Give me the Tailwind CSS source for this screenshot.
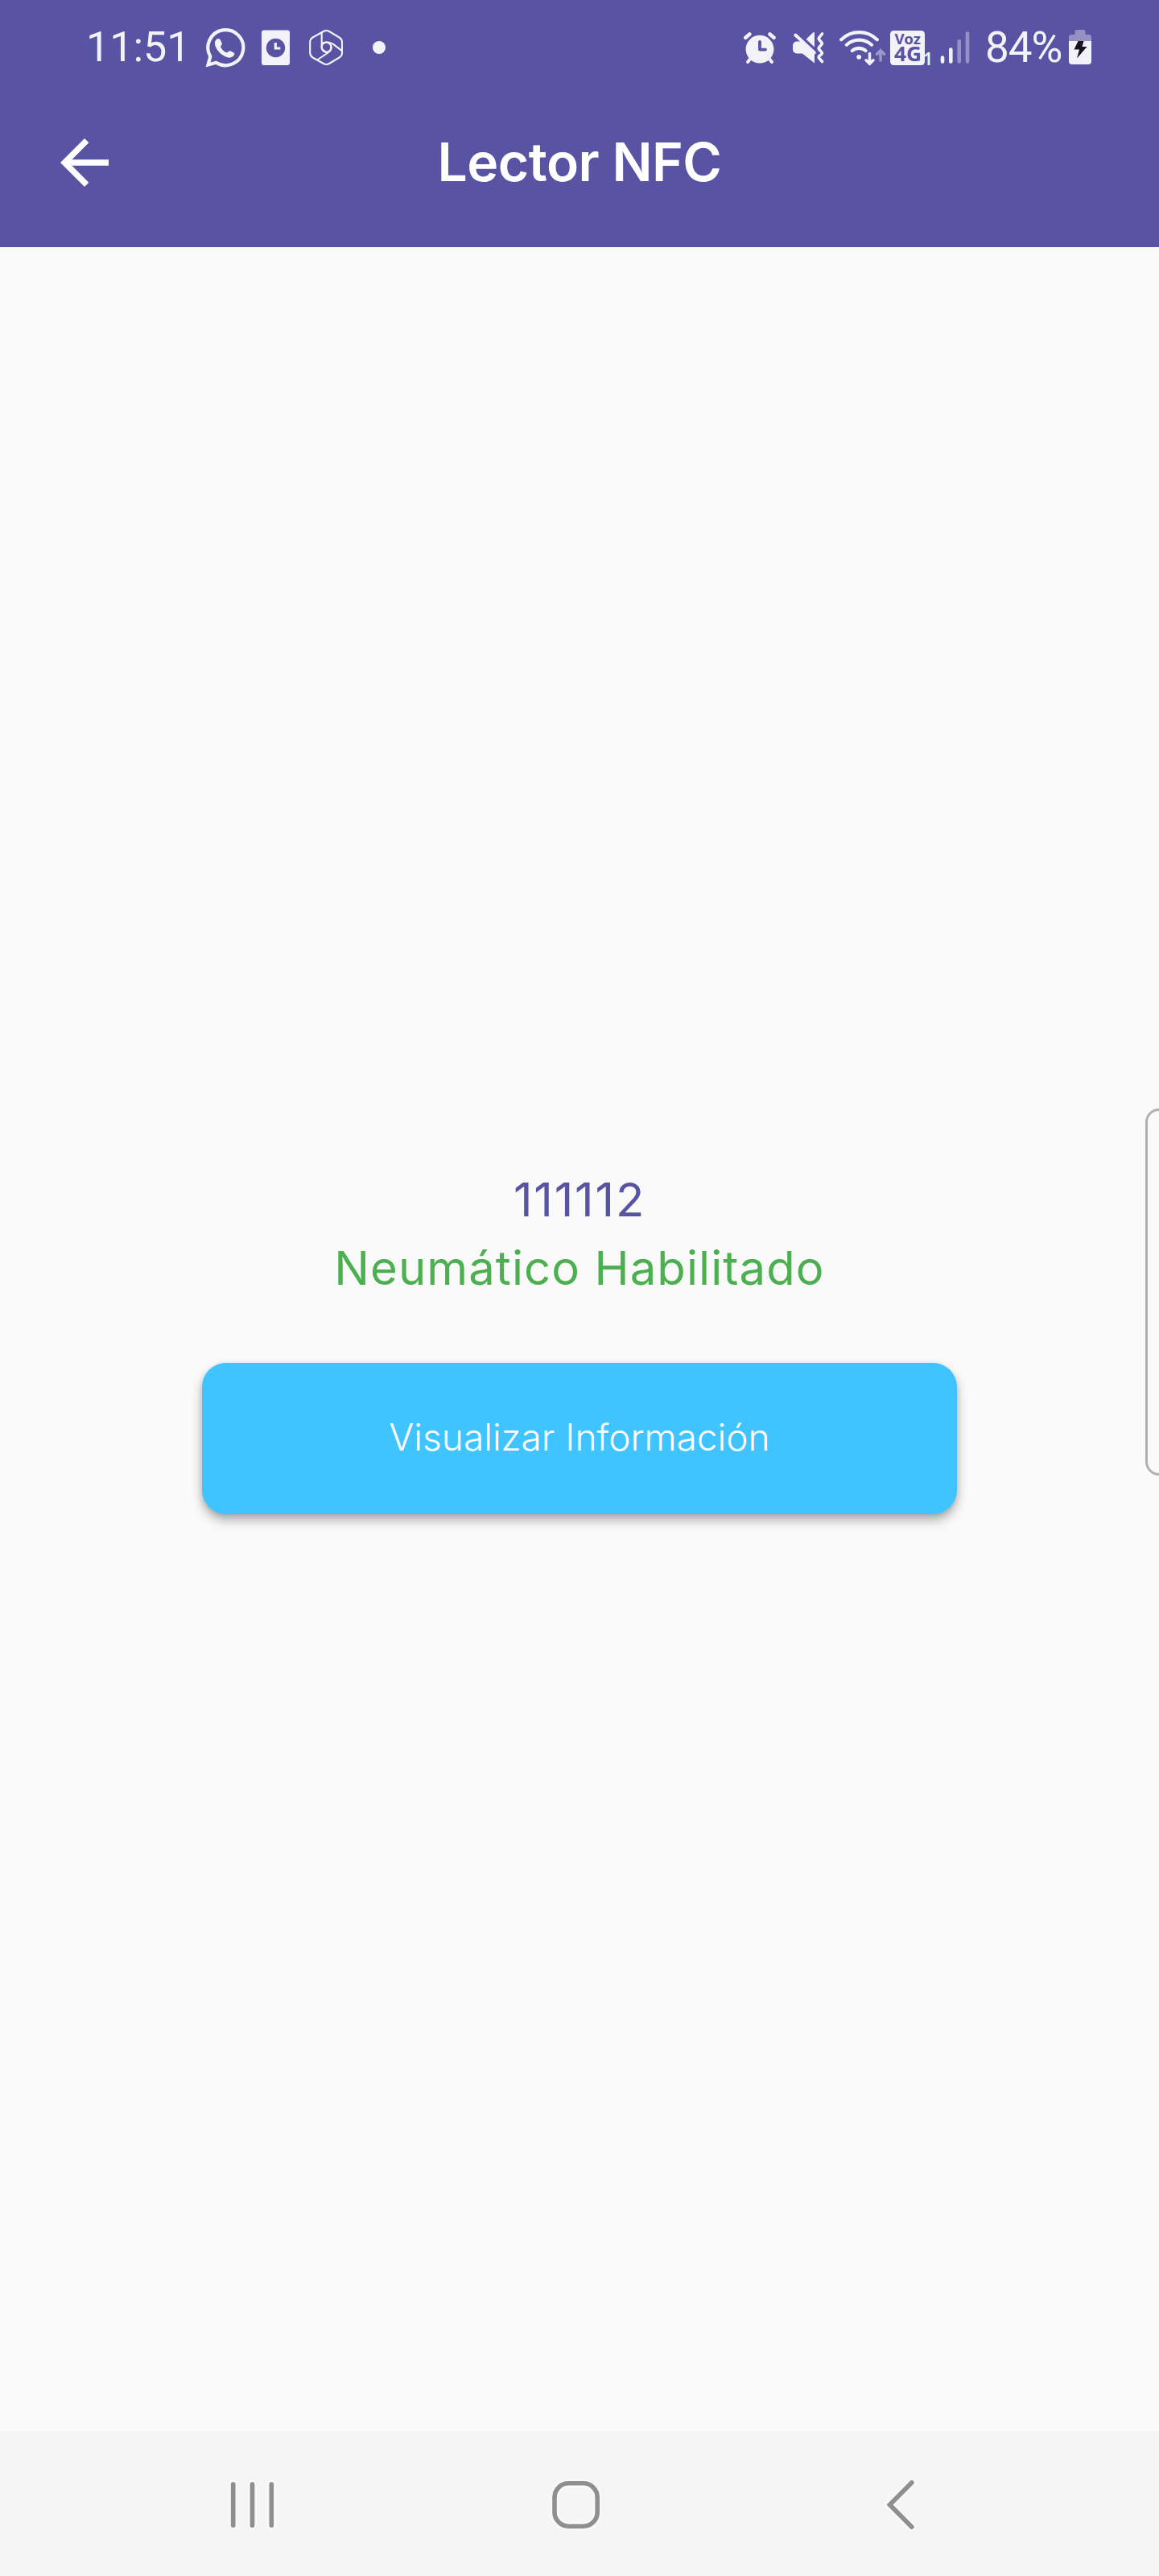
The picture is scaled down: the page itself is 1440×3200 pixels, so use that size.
<!DOCTYPE html>
<html lang="es">
<head>
<meta charset="utf-8">
<title>Lector NFC</title>
<script src="https://cdn.jsdelivr.net/npm/@tailwindcss/browser@4"></script>
</head>
<body class="bg-[#fafafa]">
<div class="relative flex h-[3200px] w-[1440px] flex-col overflow-hidden bg-[#fafafa] font-['Inter',sans-serif]">
  <header class="h-[307px] shrink-0 bg-[#5953a3]">
    <!-- Status bar -->
    <div class="flex h-[118px] items-center pr-[84px] pl-[107px] font-['Roboto',sans-serif] text-[53px] leading-none text-[#f3f2f9]">
      <span class="w-[148px] text-[52px]">11:51</span>
      <svg class="h-12 w-12 overflow-visible" viewBox="255 35 48 48" fill="none">
        <path d="M258.500 80.500L261.300 70.200A22 22 0 1 1 268.500 77.700Z" stroke="#f3f2f9" stroke-width="4.200"/>
        <path d="M269.500 48.500c1.800-1 3.500-.6 4.300 1l1.900 4.200c.7 1.600-1.900 3.300-1.500 4.500.8 2.500 4.700 6.300 7.500 7.100 1.400.4 2.700-2.600 4.300-2l4.100 1.900c1.600.8 1.500 2 .7 3.400-1.600 2.800-5 3.600-8.200 2.700-6.800-1.800-13.300-8.300-15.200-14.500-1.100-3.600-.4-6.800 2.100-8.300z" fill="#f3f2f9"/>
      </svg>
      <svg class="ml-[22px] h-[46px] w-9" viewBox="325 36 36 46">
        <rect x="325" y="37.500" width="35" height="43.500" rx="3" fill="#f3f2f9"/>
        <circle cx="342.500" cy="59.500" r="11.700" fill="#5953a3"/>
        <path d="M342.300 53v7h6" stroke="#f3f2f9" stroke-width="3.200" fill="none"/>
      </svg>
      <svg class="ml-[23px] h-[46px] w-[42px]" viewBox="384 36 42 46" fill="none" stroke="#f3f2f9" stroke-width="2.100" stroke-linejoin="round">
        <path d="M402 39q3.500-2 7 0l12.500 7.500q3.500 2.200 3.500 6v13q0 4-3.500 6L409 79q-3.500 2-7 0l-13.500-7.500q-3.300-2-3.300-6v-13q0-4 3.300-6z"/>
        <path d="M399.700 40v18.500q0 2.500 2 3.800l5.500 4M400 54c4-2.500 9-2.300 14 .8l10.500 8M411 55.500c1.500 4.500-.2 7.800-3.500 10l-13.500 9"/>
        <circle cx="405.500" cy="58.800" r="6"/>
      </svg>
      <span class="ml-[37px] size-4 rounded-full bg-[#f3f2f9]"></span>

      <svg class="ml-auto h-[42px] w-[41px]" viewBox="924 38 41 42" fill="none" stroke="#f3f2f9" stroke-linecap="round">
        <circle cx="944" cy="61.200" r="17.400" fill="#f3f2f9" stroke="none"/>
        <path d="M926.300 46.800l5-4.300M961.500 46.800l-5-4.300" stroke-width="4.600"/>
        <path d="M929 77l4-5M959 77l-4-5" stroke-width="4"/>
        <path d="M944 52v9.600h7" stroke="#5953a3" stroke-width="3.800" stroke-linejoin="round"/>
      </svg>
      <svg class="ml-5 h-[42px] w-10" viewBox="985 38 40 42" fill="none">
        <path d="M990 51.500h6l16 12.500v14.500L997 66.500h-7a5 5 0 0 1-5-5v-5a5 5 0 0 1 5-5zM1010 40.500q2-1.200 2 1v17l-10.500-9.700z" fill="#f3f2f9"/>
        <path d="M988.300 43.500l23.500 22" stroke="#f3f2f9" stroke-width="4" stroke-linecap="round"/>
        <path d="M1021.500 42l-4 5q-.5 1 0 2l3.500 4q.7 1 0 2l-3.500 4q-.5 1 0 2l3.500 4q.7 1 0 2l-3.500 3q-.5 1 0 2l4 4.500" stroke="#f3f2f9" stroke-width="3.600" stroke-linecap="round"/>
      </svg>
      <svg class="ml-[18px] h-[46px] w-[58px]" viewBox="1043 36 58 46" fill="none" stroke="#f3f2f9" stroke-width="4.200" stroke-linecap="round">
        <path d="M1045.200 49.200a32 32 0 0 1 44.600 0M1051.800 55.700a23 23 0 0 1 31.200 0M1058.800 63a13 13 0 0 1 16.800 0"/>
        <circle cx="1067.200" cy="70.800" r="2.900" fill="#f3f2f9" stroke="none"/>
        <path d="M1080.500 66.500v12.500M1076 74.800l4.500 4.500 4.500-4.500" stroke-width="3.500"/>
        <path d="M1094 75v-12M1089.500 67.200l4.500-4.500 4.500 4.500" stroke="#9c98c8" stroke-width="3.500"/>
      </svg>
      <svg class="ml-[5px] h-[46px] w-[51px] overflow-visible" viewBox="1106 36 51 46" font-family="Noto Sans, sans-serif">
        <rect x="1106" y="38" width="43" height="43" rx="4.500" fill="#f3f2f9"/>
        <text x="1111.500" y="55" font-size="18" font-weight="700" textLength="32.500" lengthAdjust="spacingAndGlyphs" fill="#5953a3">Voz</text>
        <text x="1111" y="76.300" font-size="25" font-weight="700" textLength="34" lengthAdjust="spacingAndGlyphs" fill="#5953a3">4G</text>
        <text x="1147" y="80.700" font-size="21" font-weight="600" fill="#f3f2f9">1</text>
      </svg>
      <svg class="ml-[11px] h-[42px] w-[38px]" viewBox="1168 38 38 42" fill="none" stroke="#f3f2f9" stroke-width="4.600" stroke-linecap="round">
        <path d="M1171 71.500v5M1181.300 61.500v15"/>
        <path d="M1191.700 51v25.500M1202 41.500v35" stroke="#9591c5"/>
      </svg>
      <span class="ml-[18px] w-[104px] whitespace-nowrap tracking-[-1px]">84%</span>
      <svg class="h-11 w-7 shrink-0" viewBox="1328 37 28 44">
        <path d="M1328 51v-5q0-3 3-3h4.500v-3.500q0-2.500 2.500-2.500h8q2.500 0 2.500 2.500V43h4.500q3 0 3 3v5z" fill="#9591c5"/>
        <path d="M1328 51h28v25q0 4-4 4h-20q-4 0-4-4z" fill="#f3f2f9"/>
        <path d="M1339.500 51h7l-2 7h6l-12.500 14.500 3-11h-6.500z" fill="#17151f"/>
      </svg>
    </div>
    <!-- App bar -->
    <div class="grid h-[168px] grid-cols-[1fr_auto_1fr] items-center px-[60px]">
      <svg class="size-[90px]" viewBox="0 0 24 24" fill="#fff"><path d="M20 11H7.830l5.590-5.590L12 4l-8 8 8 8 1.410-1.410L7.830 13H20v-2z"/></svg>
      <h1 class="pb-[3px] text-[66px] leading-none font-semibold tracking-[-0.5px] text-white">Lector NFC</h1>
      <span></span>
    </div>
  </header>

  <main class="flex flex-1 flex-col items-center pt-[1140px]">
    <p class="text-[58px] leading-[86px] tracking-[1.8px] text-[#5953a3]">111112</p>
    <p class="text-[58px] leading-[84px] tracking-[1.08px] text-[#4caf50]">Neumático Habilitado</p>
    <button class="mt-[76px] h-[188px] w-[938px] rounded-[30px] bg-[#40c4ff] pb-1 text-[46px] leading-none font-[350] text-white shadow-[0_8px_14px_rgba(0,0,0,0.28),0_2px_6px_rgba(0,0,0,0.12)]">Visualizar Información</button>
  </main>

  <!-- System navigation -->
  <nav class="flex h-[180px] shrink-0 items-center bg-[#f5f5f5] pl-[280px]">
    <svg class="h-[70px] w-[66px]" viewBox="280 3075 66 70" fill="none" stroke-linecap="round">
      <path d="M289.700 3086v51M313.500 3086v51M337.300 3086v51" stroke="#f9f9f9" stroke-width="11"/>
      <path d="M289.700 3086v51M313.500 3086v51M337.300 3086v51" stroke="#8f8f8f" stroke-width="5.700"/>
    </svg>
    <svg class="ml-[334px] h-[70px] w-[70px]" viewBox="680 3075 70 70" fill="none">
      <rect x="689" y="3084.800" width="53.200" height="53.400" rx="17.500" stroke="#f9f9f9" stroke-width="11"/>
      <rect x="689" y="3084.800" width="53.200" height="53.400" rx="17.500" stroke="#8f8f8f" stroke-width="5.600"/>
    </svg>
    <svg class="ml-[345px] h-[70px] w-[50px]" viewBox="1095 3075 50 70" fill="none" stroke-linecap="round">
      <path d="M1132.800 3084l-27.300 27.500 27.300 27.500" stroke="#f9f9f9" stroke-width="11"/>
      <path d="M1132.800 3084l-27.300 27.500 27.300 27.500" stroke="#8f8f8f" stroke-width="5.700"/>
    </svg>
  </nav>

  <!-- Edge panel handle -->
  <div class="absolute top-[1377px] right-0 h-[456px] w-[17px] rounded-l-[18px] border-[3px] border-r-0 border-[#b0b0b0]"></div>
</div>
</body>
</html>
